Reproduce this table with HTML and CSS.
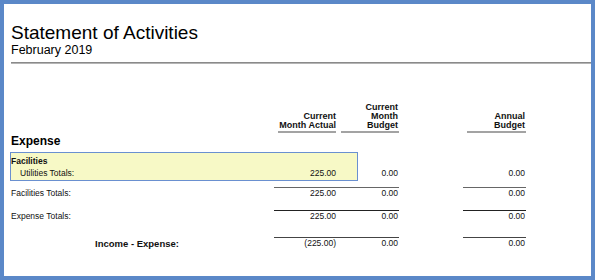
FILE: index.html
```html
<!DOCTYPE html>
<html>
<head>
<meta charset="utf-8">
<title>Statement of Activities</title>
<link rel="stylesheet" href="styles.css">
</head>
<body>
<div class="frame">
  <div class="page">
    <h1 class="title">Statement of Activities</h1>
    <div class="subtitle">February 2019</div>
    <div class="rule"></div>

    <div class="report">
      <div class="row head">
        <div class="h c1">Current<br>Month Actual</div>
        <div class="h c2">Current<br>Month<br>Budget</div>
        <div class="h c3">Annual<br>Budget</div>
      </div>

      <div class="section">Expense</div>

      <div class="row group">
        <div class="hilite"></div>
        <div class="lbl strong r1">Facilities</div>
        <div class="lbl indent r2">Utilities Totals:</div>
        <div class="num c1 r2">225.00</div>
        <div class="num c2 r2">0.00</div>
        <div class="num c3 r2">0.00</div>
      </div>

      <div class="row total fac">
        <div class="lbl">Facilities Totals:</div>
        <div class="num c1">225.00</div>
        <div class="num c2">0.00</div>
        <div class="num c3">0.00</div>
      </div>

      <div class="row total exp">
        <div class="lbl">Expense Totals:</div>
        <div class="num c1">225.00</div>
        <div class="num c2">0.00</div>
        <div class="num c3">0.00</div>
      </div>

      <div class="row total net">
        <div class="lbl net-lbl">Income - Expense:</div>
        <div class="num c1">(225.00)</div>
        <div class="num c2">0.00</div>
        <div class="num c3">0.00</div>
      </div>
    </div>
  </div>
</div>
</body>
</html>
```

FILE: styles.css
```css
html, body {
  margin: 0;
  padding: 0;
  background: #ffffff;
}

body {
  font-family: "Liberation Sans", Arial, sans-serif;
  color: #111;
}

.frame {
  width: 595px;
  height: 280px;
  box-sizing: border-box;
  border: 4px solid #5b88c8;
  overflow: hidden;
}

.page {
  padding-left: 7px;
}

.title {
  margin: 19px 0 0;
  font-size: 19px;
  line-height: 20px;
  font-weight: normal;
  color: #000;
}

.subtitle {
  margin-top: 1px;
  font-size: 12.5px;
  line-height: 13px;
  color: #000;
}

.rule {
  margin-top: 5px;
  height: 0;
  border-top: 1px solid #8a8a8a;
  border-bottom: 1px solid #b4b4b4;
}

.row {
  display: grid;
  grid-template-columns: 263px 62px 22px 41px 64px 63px;
}

.head {
  margin-top: 39px;
  align-items: end;
}

.h {
  font-size: 9px;
  line-height: 9px;
  font-weight: bold;
  text-align: right;
  padding-bottom: 1px;
  border-bottom: 2px solid #a3a3a3;
  color: #111;
}

.h.c1 { grid-column: 2; margin-left: 4px; }
.h.c2 { grid-column: 3 / 5; margin-left: 5px; padding-right: 1px; }
.h.c3 { grid-column: 6; margin-left: 4px; padding-right: 1px; }

.section {
  margin-top: 1px;
  font-size: 12px;
  line-height: 14px;
  font-weight: bold;
  color: #000;
}

.group {
  margin-top: 4px;
  grid-template-rows: 3px 12px 12px 2px;
}

.hilite {
  grid-column: 1 / 4;
  grid-row: 1 / 5;
  margin-left: -1px;
  border: 1px solid #6a90d0;
  background: #f7f9c6;
}

.lbl, .num {
  font-size: 8.5px;
  line-height: 12px;
  color: #111;
}

.lbl { grid-column: 1; }
.strong { font-weight: bold; }
.indent { padding-left: 9px; }

.r1 { grid-row: 2; }
.r2 { grid-row: 3; }

.num { text-align: right; }
.num.c1 { grid-column: 2; }
.num.c2 { grid-column: 3 / 5; padding-right: 1px; }
.num.c3 { grid-column: 6; padding-right: 1px; }

.total .lbl, .total .num {
  line-height: 11px;
  border-top: 1px solid transparent;
}

.fac { margin-top: 6px; }
.fac .num { border-top-color: #666; }

.exp { margin-top: 11px; }
.exp .num { border-top-color: #222; }

.net { margin-top: 15px; }
.net .num { border-top-color: #444; }

.net .net-lbl {
  font-size: 9.5px;
  font-weight: bold;
  padding-left: 84px;
}
```
